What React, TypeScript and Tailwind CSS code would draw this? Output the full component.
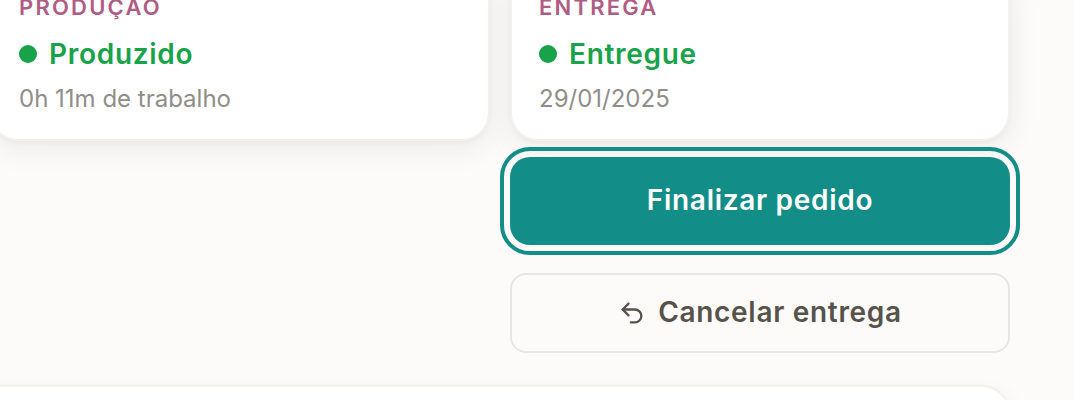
import { Undo2 } from 'lucide-react'

type Step = {
  label: string
  status: string
  detail: string
}

const steps: Step[] = [
  { label: 'Produção', status: 'Produzido', detail: '0h 11m de trabalho' },
  { label: 'Entrega', status: 'Entregue', detail: '29/01/2025' },
]

function StepCard({ label, status, detail }: Step) {
  return (
    <section className="rounded-[28px] border-2 border-[#f2f1ef] bg-white bg-clip-padding px-[27px] py-6 shadow-[0_2px_4px_rgba(28,25,23,0.04),0_8px_32px_rgba(28,25,23,0.07)]">
      <h2 className="text-[22px] leading-7 font-semibold tracking-widest text-[#b05c84] uppercase">{label}</h2>
      <p className="mt-[15px] flex items-center gap-3 text-[28px] leading-9 font-semibold tracking-wide text-[#18a34a]">
        <span className="size-[18px] rounded-full bg-[#18a34a]" />
        {status}
      </p>
      <p className="mt-[11px] text-2xl leading-8 text-[#918e87]">{detail}</p>
    </section>
  )
}

export default function App() {
  return (
    <div className="h-screen overflow-hidden bg-[#fcfbf9] font-['Inter',sans-serif]">
      <main className="-mt-[33px] mr-16 -ml-2.5">
        <div className="grid grid-cols-2 gap-x-5">
          {steps.map((step) => (
            <StepCard key={step.label} {...step} />
          ))}
          <div className="relative col-start-2 mt-4 flex flex-col gap-7">
            <button
              type="button"
              className="h-[88px] rounded-[20px] bg-[#138d87] pb-0.5 text-[28px] leading-9 font-semibold tracking-wide text-white outline-4 outline-offset-6 outline-[#138d87]"
            >
              Finalizar pedido
            </button>
            <button
              type="button"
              className="flex h-20 items-center justify-center gap-3 rounded-2xl border-2 border-[#e8e6e1] pb-0.5 text-[28px] leading-9 font-semibold tracking-wide text-[#57534b]"
            >
              <Undo2 className="mt-0.5 size-7" strokeWidth={2} />
              Cancelar entrega
            </button>
          </div>
        </div>
        <section className="mt-8 -ml-10 h-40 rounded-[28px] border-2 border-[#f2f1ef] bg-white bg-clip-padding shadow-[0_2px_4px_rgba(28,25,23,0.03),0_8px_24px_rgba(28,25,23,0.06)]" />
      </main>
    </div>
  )
}
